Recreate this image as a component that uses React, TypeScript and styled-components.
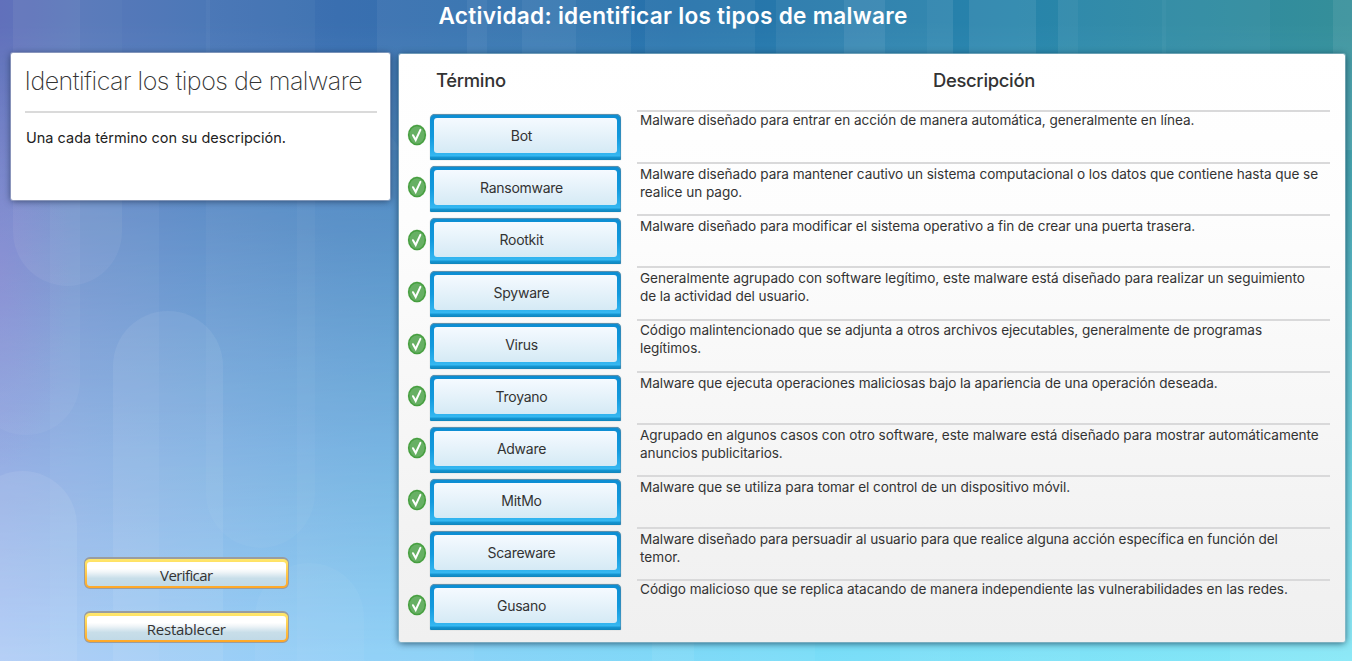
import React from "react";
import styled, { createGlobalStyle } from "styled-components";

const GlobalStyle = createGlobalStyle`
  html, body { margin: 0; padding: 0; overflow: hidden; }
  * { box-sizing: border-box; }
`;

const Page = styled.div`
  position: relative;
  width: 1352px;
  height: 661px;
  overflow: hidden;
  display: flex;
  flex-direction: column;
  font-family: Inter, "Liberation Sans", sans-serif;
  color: #333;
`;

const Backdrop = styled.svg`
  position: absolute;
  inset: 0;
`;

const Title = styled.h1`
  position: relative;
  margin: 0;
  height: 53px;
  padding: 2px 6px 0 0;
  text-align: center;
  color: #fff;
  font-size: 22.6px;
  line-height: 28px;
  font-weight: 600;
  letter-spacing: 0.28px;
`;

const Columns = styled.main`
  position: relative;
  flex: 1;
  display: flex;
  align-items: flex-start;
  gap: 9px;
  padding-left: 10.5px;
`;

const Sidebar = styled.aside`
  width: 379.5px;
  height: 608px;
  display: flex;
  flex-direction: column;
  align-items: center;
`;

const Instructions = styled.section`
  width: 379.5px;
  height: 147px;
  padding: 10px 13px 0 14px;
  background: #fff;
  border-radius: 2px;
  box-shadow: 0 0 0 1px rgba(190, 195, 215, 0.5), 0 1px 7px rgba(20, 35, 65, 0.7);
`;

const Heading = styled.h2`
  margin: 0;
  height: 50px;
  border-bottom: 2px solid #dadada;
  font-size: 25px;
  line-height: 37px;
  font-weight: 200;
  letter-spacing: -0.5px;
  white-space: nowrap;
`;

const Hint = styled.p`
  margin: 15px 0 0 1.5px;
  font-size: 14.5px;
  line-height: 20px;
  color: #222;
  white-space: nowrap;
`;

const Actions = styled.div`
  display: flex;
  flex-direction: column;
  gap: 21.5px;
  margin-top: 357px;
  margin-right: 28px;
`;

const ActionButton = styled.button`
  width: 205px;
  height: 32px;
  padding: 2px;
  border: 1.5px solid #999da0;
  border-top-width: 2px;
  border-radius: 6px;
  background: linear-gradient(#ffe86c, #ffa727);
`;

const ActionFace = styled.span<{ $tracking: number }>`
  display: block;
  height: 24px;
  margin-top: 1px;
  border-radius: 3px;
  background: linear-gradient(#fff 28%, #f0f5f8 42%, #c8dee9 68%, #c1dae7);
  color: #333;
  font-family: "Open Sans", sans-serif;
  font-size: 15px;
  line-height: 26px;
  letter-spacing: ${(p) => p.$tracking}px;
`;

const Board = styled.section`
  width: 946px;
  height: 588px;
  margin-top: 1px;
  background: linear-gradient(#fff 0%, #fdfdfd 28%, #f2f2f2 85%, #f0f0f0 100%);
  border-radius: 2px;
  box-shadow: 0 0 0 1px rgba(170, 205, 215, 0.5), 0 1px 7px rgba(10, 45, 70, 0.8);
`;

const BoardHead = styled.header`
  display: grid;
  grid-template-columns: 238px 694px;
  height: 56px;
  font-size: 18.4px;
  line-height: 26px;
  font-weight: 500;
  padding-top: 13px;
`;

const TermHead = styled.div`
  padding-left: 37px;
  letter-spacing: -0.3px;
`;

const DescHead = styled.div`
  text-align: center;
  letter-spacing: -0.3px;
`;

const Row = styled.div`
  display: grid;
  grid-template-columns: 23px 191px 693px;
  height: 52.16px;
  padding-left: 8px;
`;

const Check = styled.svg`
  width: 20px;
  height: 22px;
  margin-top: 14.3px;
`;

const Term = styled.div`
  height: 46px;
  margin-top: 4.1px;
  padding: 4px 4px 7px;
  border-radius: 5px 5px 1px 1px;
  background: linear-gradient(#0d8dd2 0, #1299dd 50%, #2fb2ee 84%, #36b8f1 91%, #1495d2 94%, #1185bb);
  box-shadow: inset 0 1px 0 #5b91ae, inset -1px 0 0 rgba(80, 130, 160, 0.5), 0 0 1px rgba(60, 80, 90, 0.5);
`;

const TermFace = styled.div`
  height: 35px;
  padding: 1px 8px 0 0;
  border-radius: 3px;
  background: linear-gradient(#f5faff, #d5eaf5);
  text-align: center;
  font-size: 14px;
  line-height: 34px;
  letter-spacing: -0.27px;
`;

const Desc = styled.div`
  margin-left: 16px;
  padding-left: 3px;
  border-top: 2px solid #d9d9da;
  width: 693px;
  font-size: 13.6px;
  line-height: 18px;
  white-space: nowrap;
`;

const Lines = styled.div<{ $shift: number }>`
  margin-top: ${(p) => p.$shift}px;
`;

const Line = styled.div<{ $tracking: number }>`
  letter-spacing: ${(p) => p.$tracking}px;
`;

type DescLine = [text: string, tracking: number];

const entries: { term: string; lines: DescLine[] }[] = [
  { term: "Bot", lines: [["Malware diseñado para entrar en acción de manera automática, generalmente en línea.", -0.06]] },
  {
    term: "Ransomware",
    lines: [
      ["Malware diseñado para mantener cautivo un sistema computacional o los datos que contiene hasta que se", -0.06],
      ["realice un pago.", -0.06],
    ],
  },
  { term: "Rootkit", lines: [["Malware diseñado para modificar el sistema operativo a fin de crear una puerta trasera.", -0.08]] },
  {
    term: "Spyware",
    lines: [
      ["Generalmente agrupado con software legítimo, este malware está diseñado para realizar un seguimiento", -0.06],
      ["de la actividad del usuario.", -0.09],
    ],
  },
  {
    term: "Virus",
    lines: [
      ["Código malintencionado que se adjunta a otros archivos ejecutables, generalmente de programas", -0.055],
      ["legítimos.", -0.06],
    ],
  },
  { term: "Troyano", lines: [["Malware que ejecuta operaciones maliciosas bajo la apariencia de una operación deseada.", -0.07]] },
  {
    term: "Adware",
    lines: [
      ["Agrupado en algunos casos con otro software, este malware está diseñado para mostrar automáticamente", -0.06],
      ["anuncios publicitarios.", -0.07],
    ],
  },
  { term: "MitMo", lines: [["Malware que se utiliza para tomar el control de un dispositivo móvil.", -0.07]] },
  {
    term: "Scareware",
    lines: [
      ["Malware diseñado para persuadir al usuario para que realice alguna acción específica en función del", -0.095],
      ["temor.", 0],
    ],
  },
  {
    term: "Gusano",
    lines: [["Código malicioso que se replica atacando de manera independiente las vulnerabilidades en las redes.", -0.05]],
  },
];

const CheckIcon = () => (
  <Check viewBox="0 0 20 22">
    <ellipse cx="10" cy="11" rx="9.5" ry="10.7" fill="#dfeedd" />
    <ellipse cx="10" cy="11" rx="8.3" ry="9.5" fill="#67b064" stroke="#469e3f" strokeWidth="1.5" />
    <path d="M6 11.2 L8.7 16 L13.4 5.8" fill="none" stroke="#fff" strokeWidth="2" strokeLinecap="round" />
  </Check>
);

// x, y, width, height, opacity of each translucent rounded column
const pills: [number, number, number, number, number][] = [
  [13, -80, 109, 366, 0.055],
  [-28, -80, 108, 515, 0.045],
  [50, 120, 109, 700, 0.04],
  [-32, 471, 109, 400, 0.08],
  [113, 311, 110, 500, 0.07],
  [206, -80, 109, 628, 0.035],
  [297, 120, 109, 700, 0.035],
  [255, 563, 109, 300, 0.04],
];

// x, width, opacity of the straight bands along the top edge
const bands: [number, number, number][] = [
  [122, 84, 0.035],
  [206, 4, 0.03],
  [377, 90, 0.05],
  [467, 20, 0.1],
  [487, 35, 0.06],
  [522, 54, 0.1],
  [576, 55, 0.06],
  [645, 110, 0.055],
  [776, 68, 0.06],
  [844, 41, 0.12],
  [885, 42, 0.06],
  [927, 26, 0.09],
  [969, 67, 0.08],
  [1058, 20, 0.07],
  [1078, 84, 0.035],
  [1162, 4, 0.07],
  [1166, 104, 0.045],
  [1333, 19, 0.08],
];

// x, width, opacity of the bands that show below the board
const lowerBands: [number, number, number][] = [
  [406, 68, 0.04],
  [652, 42, 0.06],
  [740, 75, 0.04],
  [900, 50, 0.05],
  [1010, 70, 0.04],
  [1230, 122, 0.07],
];

const BackgroundArt = () => (
  <Backdrop width="1352" height="661" viewBox="0 0 1352 661" aria-hidden="true">
    <defs>
      <linearGradient id="sky">
        <stop offset="0" stopColor="#5a6ab8" />
        <stop offset="0.06" stopColor="#5374b8" />
        <stop offset="0.15" stopColor="#4674b5" />
        <stop offset="0.25" stopColor="#3a6fb0" />
        <stop offset="0.5" stopColor="#2672ab" />
        <stop offset="0.75" stopColor="#2784ab" />
        <stop offset="1" stopColor="#358f99" />
      </linearGradient>
      <linearGradient id="glow">
        <stop offset="0" stopColor="#b0ccf6" />
        <stop offset="0.28" stopColor="#8fd1f7" />
        <stop offset="0.6" stopColor="#7adef8" />
        <stop offset="1" stopColor="#86e8f7" />
      </linearGradient>
      <linearGradient id="fade" x1="0" y1="0" x2="0" y2="1">
        <stop offset="0.03" stopColor="#000" />
        <stop offset="0.7" stopColor="#b4b4b4" />
        <stop offset="1" stopColor="#fff" />
      </linearGradient>
      <mask id="fadeMask">
        <rect width="1352" height="661" fill="url(#fade)" />
      </mask>
      <radialGradient id="violet">
        <stop offset="0" stopColor="#9a86d8" stopOpacity="0.3" />
        <stop offset="1" stopColor="#9a86d8" stopOpacity="0" />
      </radialGradient>
    </defs>
    <rect width="1352" height="661" fill="url(#sky)" />
    <rect width="1352" height="661" fill="url(#glow)" mask="url(#fadeMask)" />
    <ellipse cx="0" cy="270" rx="70" ry="200" fill="url(#violet)" />
    {bands.map(([x, w, o]) => (
      <rect key={x} x={x} y={0} width={w} height={150} fill="#fff" opacity={o} />
    ))}
    {lowerBands.map(([x, w, o]) => (
      <rect key={x} x={x} y={600} width={w} height={61} fill="#fff" opacity={o} />
    ))}
    {pills.map(([x, y, w, h, o]) => (
      <rect key={x} x={x} y={y} width={w} height={h} rx={w / 2} fill="#fff" opacity={o} />
    ))}
  </Backdrop>
);

export default function App() {
  return (
    <Page>
      <GlobalStyle />
      <BackgroundArt />
      <Title>Actividad: identificar los tipos de malware</Title>
      <Columns>
        <Sidebar>
          <Instructions>
            <Heading>Identificar los tipos de malware</Heading>
            <Hint>Una cada término con su descripción.</Hint>
          </Instructions>
          <Actions>
            <ActionButton>
              <ActionFace $tracking={-0.6}>Verificar</ActionFace>
            </ActionButton>
            <ActionButton>
              <ActionFace $tracking={-0.25}>Restablecer</ActionFace>
            </ActionButton>
          </Actions>
        </Sidebar>
        <Board>
          <BoardHead>
            <TermHead>Término</TermHead>
            <DescHead>Descripción</DescHead>
          </BoardHead>
          {entries.map(({ term, lines }, i) => (
            <Row key={term}>
              <CheckIcon />
              <Term>
                <TermFace>{term}</TermFace>
              </Term>
              <Desc>
                <Lines $shift={i === 0 || i === entries.length - 1 ? -1 : 0.75}>
                  {lines.map(([text, tracking]) => (
                    <Line key={text} $tracking={tracking}>
                      {text}
                    </Line>
                  ))}
                </Lines>
              </Desc>
            </Row>
          ))}
        </Board>
      </Columns>
    </Page>
  );
}
